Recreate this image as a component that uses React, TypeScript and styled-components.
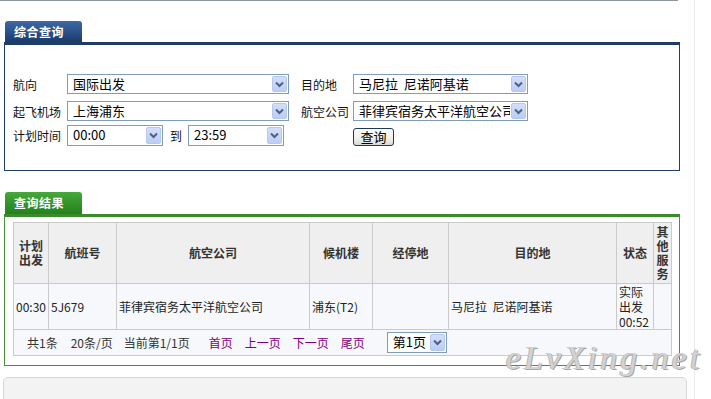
import React from "react";
import styled, { createGlobalStyle, css } from "styled-components";

type Tone = "blue" | "green";

const GlobalStyle = createGlobalStyle`
  html, body {
    margin: 0;
    padding: 0;
    background: #fff;
    overflow: hidden;
  }
  body {
    font-family: "Noto Sans CJK SC", "Noto Sans", sans-serif;
    font-size: 12px;
    color: #222;
  }
`;

const Page = styled.div`
  position: relative;
  width: 695px;
  height: 399px;
  box-sizing: border-box;
  border-right: 1px solid #ececec;
`;

const TopRule = styled.div`
  width: 678px;
  height: 1px;
  background: #8d97a1;
`;

const tabTone = {
  blue: css`
    background: linear-gradient(#3e68a4, #2a5088 55%, #1b3a6a);
  `,
  green: css`
    background: linear-gradient(#46a83a, #33922a 55%, #26801d);
  `,
};

const Tab = styled.div<{ $tone: Tone; $top: number; $h: number }>`
  ${(p) => tabTone[p.$tone]}
  margin: ${(p) => p.$top}px 0 0 5px;
  width: 77px;
  height: ${(p) => p.$h}px;
  line-height: ${(p) => p.$h}px;
  box-sizing: border-box;
  padding-left: 9px;
  border-radius: 3px 3px 0 0;
  color: #fff;
  font-weight: bold;
  font-size: 12px;
  letter-spacing: 0.5px;
`;

const Panel = styled.div<{ $tone: Tone; $h: number }>`
  margin-left: 4px;
  width: 676px;
  height: ${(p) => p.$h}px;
  box-sizing: border-box;
  border: 1px solid ${(p) => (p.$tone === "blue" ? "#1f3c66" : "#4b8f3d")};
  border-top: 3px solid ${(p) => (p.$tone === "blue" ? "#1f3c66" : "#3b8a2c")};
`;

const QueryForm = styled.div`
  padding: 29px 8px 0;
`;

const FormRow = styled.div<{ $gap: number; $h: number }>`
  display: flex;
  align-items: center;
  height: ${(p) => p.$h}px;
  margin-top: ${(p) => p.$gap}px;
`;

const Label = styled.span<{ $w: number }>`
  width: ${(p) => p.$w}px;
  flex: none;
  font-size: 12px;
  color: #111;
`;

const Spacer = styled.span<{ $w: number }>`
  width: ${(p) => p.$w}px;
  flex: none;
`;

const Between = styled.span`
  margin: 0 6px 0 7px;
  font-size: 12px;
  color: #111;
`;

const SelectBox = styled.div<{ $w: number }>`
  width: ${(p) => p.$w}px;
  height: 100%;
  flex: none;
  box-sizing: border-box;
  border: 1px solid #7f9db9;
  background: #fff;
  display: flex;
  align-items: stretch;
`;

const SelectValue = styled.span`
  flex: 1;
  min-width: 0;
  padding-left: 5px;
  font-size: 13px;
  line-height: 18px;
  white-space: pre;
  overflow: hidden;
  color: #000;
`;

const ArrowBtn = styled.span`
  flex: none;
  width: 15px;
  margin: 1px;
  box-sizing: border-box;
  border: 1px solid #b6c8ef;
  border-radius: 2px;
  background: linear-gradient(#d3defa, #bccdf4);
  display: flex;
  align-items: center;
  justify-content: center;
`;

const Button = styled.button`
  width: 41px;
  height: 18px;
  margin-top: 2px;
  padding: 0;
  box-sizing: border-box;
  border: 1px solid #1e3a5a;
  border-radius: 3px;
  background: linear-gradient(#ffffff, #eef0ec 60%, #d8dcd6);
  font-family: "Noto Sans CJK SC", sans-serif;
  font-size: 13px;
  line-height: 15px;
  color: #000;
`;

const ResultWrap = styled.div`
  padding: 5px 8px 0;
`;

const Table = styled.table`
  width: 658px;
  border-collapse: collapse;
  table-layout: fixed;
  font-size: 12px;
`;

const Col = styled.col<{ $w: number }>`
  width: ${(p) => p.$w}px;
`;

const Th = styled.th`
  background: #efefef;
  border: 1px solid #cacaca;
  color: #333;
  font-weight: bold;
  text-align: center;
  line-height: 14px;
  padding: 2px 0;
  height: 56px;
`;

const Td = styled.td<{ $top?: boolean }>`
  background: #f6f8fb;
  border: 1px solid #cacaca;
  color: #222;
  padding: 0 2px;
  line-height: 15px;
  height: 45px;
  vertical-align: ${(p) => (p.$top ? "top" : "middle")};
  white-space: ${(p) => (p.$top ? "normal" : "pre")};
  overflow: hidden;
`;

const PagerCell = styled.td`
  background: #f6f8fb;
  border: 1px solid #cacaca;
  height: 25px;
  padding: 0 0 0 13px;
`;

const Pager = styled.div`
  display: flex;
  align-items: center;
  color: #333;
  font-size: 12px;
`;

const PagerText = styled.span<{ $gap: number }>`
  margin-right: ${(p) => p.$gap}px;
  white-space: nowrap;
`;

const PagerLink = styled.a<{ $gap: number }>`
  margin-right: ${(p) => p.$gap}px;
  color: #800080;
  text-decoration: none;
  white-space: nowrap;
`;

const PageSelect = styled(SelectBox)`
  height: 21px;
`;

const BottomBox = styled.div`
  margin: 11px 0 0 3px;
  width: 684px;
  height: 40px;
  box-sizing: border-box;
  border: 1px solid #d6d6d6;
  border-radius: 5px 5px 0 0;
  background: #f3f3f3;
`;

const Watermark = styled.div`
  position: absolute;
  left: 506px;
  top: 339px;
  font-family: "Liberation Serif", serif;
  font-style: italic;
  font-size: 34px;
  letter-spacing: 3px;
  color: #d2d2d2;
  text-shadow: 1px 1px 0 #a8a8a8, -1px 0 0 #b8b8b8;
  pointer-events: none;
  white-space: nowrap;
`;

const Chevron = () => (
  <svg width="9" height="7" viewBox="0 0 9 7">
    <polyline points="1,1.5 4.5,5 8,1.5" fill="none" stroke="#4d6185" strokeWidth="2" />
  </svg>
);

const Select: React.FC<{ value: string; width: number }> = ({ value, width }) => (
  <SelectBox $w={width}>
    <SelectValue>{value}</SelectValue>
    <ArrowBtn>
      <Chevron />
    </ArrowBtn>
  </SelectBox>
);

const cols = [35, 68, 193, 63, 76, 168, 37, 18];

export default function App() {
  return (
    <>
      <GlobalStyle />
      <Page>
        <TopRule />

        <Tab $tone="blue" $top={20} $h={21}>综合查询</Tab>
        <Panel $tone="blue" $h={129}>
          <QueryForm>
            <FormRow $gap={0} $h={20}>
              <Label $w={54}>航向</Label>
              <Select value="国际出发" width={222} />
              <Spacer $w={12} />
              <Label $w={52}>目的地</Label>
              <Select value="马尼拉  尼诺阿基诺" width={175} />
            </FormRow>
            <FormRow $gap={7} $h={20}>
              <Label $w={54}>起飞机场</Label>
              <Select value="上海浦东" width={222} />
              <Spacer $w={12} />
              <Label $w={52}>航空公司</Label>
              <Select value="菲律宾宿务太平洋航空公司" width={175} />
            </FormRow>
            <FormRow $gap={4} $h={21}>
              <Label $w={54}>计划时间</Label>
              <Select value="00:00" width={96} />
              <Between>到</Between>
              <Select value="23:59" width={96} />
              <Spacer $w={69} />
              <Button>查询</Button>
            </FormRow>
          </QueryForm>
        </Panel>

        <Tab $tone="green" $top={21} $h={22}>查询结果</Tab>
        <Panel $tone="green" $h={152}>
          <ResultWrap>
            <Table>
              <colgroup>
                {cols.map((w, i) => (
                  <Col key={i} $w={w} />
                ))}
              </colgroup>
              <thead>
                <tr>
                  <Th>计划出发</Th>
                  <Th>航班号</Th>
                  <Th>航空公司</Th>
                  <Th>候机楼</Th>
                  <Th>经停地</Th>
                  <Th>目的地</Th>
                  <Th>状态</Th>
                  <Th>其他服务</Th>
                </tr>
              </thead>
              <tbody>
                <tr>
                  <Td>00:30</Td>
                  <Td>5J679</Td>
                  <Td>菲律宾宿务太平洋航空公司</Td>
                  <Td>浦东(T2)</Td>
                  <Td></Td>
                  <Td>马尼拉  尼诺阿基诺</Td>
                  <Td $top>
                    实际出发
                    <br />
                    00:52
                  </Td>
                  <Td></Td>
                </tr>
                <tr>
                  <PagerCell colSpan={8}>
                    <Pager>
                      <PagerText $gap={13}>共1条</PagerText>
                      <PagerText $gap={11}>20条/页</PagerText>
                      <PagerText $gap={19}>当前第1/1页</PagerText>
                      <PagerLink href="#" $gap={12}>首页</PagerLink>
                      <PagerLink href="#" $gap={12}>上一页</PagerLink>
                      <PagerLink href="#" $gap={12}>下一页</PagerLink>
                      <PagerLink href="#" $gap={22}>尾页</PagerLink>
                      <PageSelect $w={60}>
                        <SelectValue>第1页</SelectValue>
                        <ArrowBtn>
                          <Chevron />
                        </ArrowBtn>
                      </PageSelect>
                    </Pager>
                  </PagerCell>
                </tr>
              </tbody>
            </Table>
          </ResultWrap>
        </Panel>

        <BottomBox />
        <Watermark>eLvXing.net</Watermark>
      </Page>
    </>
  );
}
